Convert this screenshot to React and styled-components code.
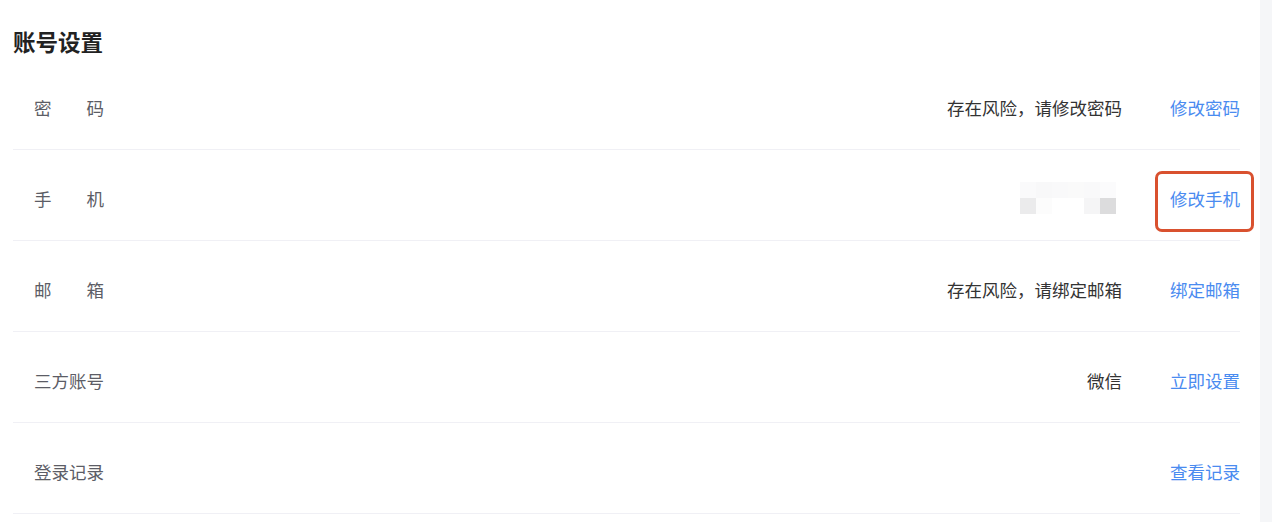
import React from "react";
import styled, { createGlobalStyle } from "styled-components";

const Global = createGlobalStyle`
  html, body { margin: 0; padding: 0; background: #fff; }
  body { font-family: "Noto Sans CJK SC", "Noto Sans", sans-serif; }
`;

const Page = styled.div`
  display: flex;
  width: 1272px;
  height: 522px;
  overflow: hidden;
`;

const Main = styled.main`
  width: 1260px;
  box-sizing: border-box;
  padding: 25px 20px 0 13px;
`;

const Gutter = styled.div`
  flex: 1;
  background: #f5f6f8;
`;

const Title = styled.h2`
  margin: 0 0 2px;
  font-size: 22.5px;
  line-height: 32px;
  font-weight: 700;
  color: #222;
`;

const Row = styled.div`
  display: flex;
  align-items: center;
  padding: 37px 0 29px 21px;
  border-bottom: 1px solid #f0f0f5;
`;

const Label = styled.span`
  width: 70px;
  font-size: 17.5px;
  line-height: 24px;
  color: #5c5d66;
  text-align: justify;
  text-align-last: justify;
  white-space: nowrap;
`;

const Spacer = styled.div`
  flex: 1;
`;

const Value = styled.span`
  font-size: 17.5px;
  line-height: 24px;
  color: #333;
  margin-right: 48px;
`;

const Link = styled.a`
  position: relative;
  font-size: 17.5px;
  line-height: 24px;
  color: #4a8bf0;
  text-decoration: none;
  cursor: pointer;
  &::after {
    content: "";
    display: ${(p) => (p.$marked ? "block" : "none")};
    position: absolute;
    top: -16px;
    bottom: -21px;
    left: -15px;
    right: -14px;
    border: 3px solid #d9512f;
    border-radius: 7px;
  }
`;

const Mosaic = styled.div`
  display: grid;
  grid-template-columns: repeat(6, 16px);
  grid-auto-rows: 16px;
  margin: -5px 54px -3px 0;
`;

const Cell = styled.span`
  background: ${(p) => p.$c};
`;

const mosaicColors = [
  "#fafafb", "#f8f8f9", "#f9f9fa", "#fafafa", "#f9f9fa", "#fbfbfc",
  "#ebebec", "#fcfcfc", "#ffffff", "#ffffff", "#f5f5f6", "#dcdcdd",
];

const rows = [
  { label: "密码", value: "存在风险，请修改密码", link: "修改密码" },
  { label: "手机", mosaic: true, link: "修改手机", marked: true },
  { label: "邮箱", value: "存在风险，请绑定邮箱", link: "绑定邮箱" },
  { label: "三方账号", value: "微信", link: "立即设置" },
  { label: "登录记录", link: "查看记录" },
];

export default function App() {
  return (
    <Page>
      <Global />
      <Main>
        <Title>账号设置</Title>
        {rows.map((r) => (
          <Row key={r.label}>
            <Label>{r.label}</Label>
            <Spacer />
            {r.value && <Value>{r.value}</Value>}
            {r.mosaic && (
              <Mosaic>
                {mosaicColors.map((c, i) => (
                  <Cell key={i} $c={c} />
                ))}
              </Mosaic>
            )}
            <Link $marked={r.marked}>{r.link}</Link>
          </Row>
        ))}
      </Main>
      <Gutter />
    </Page>
  );
}
